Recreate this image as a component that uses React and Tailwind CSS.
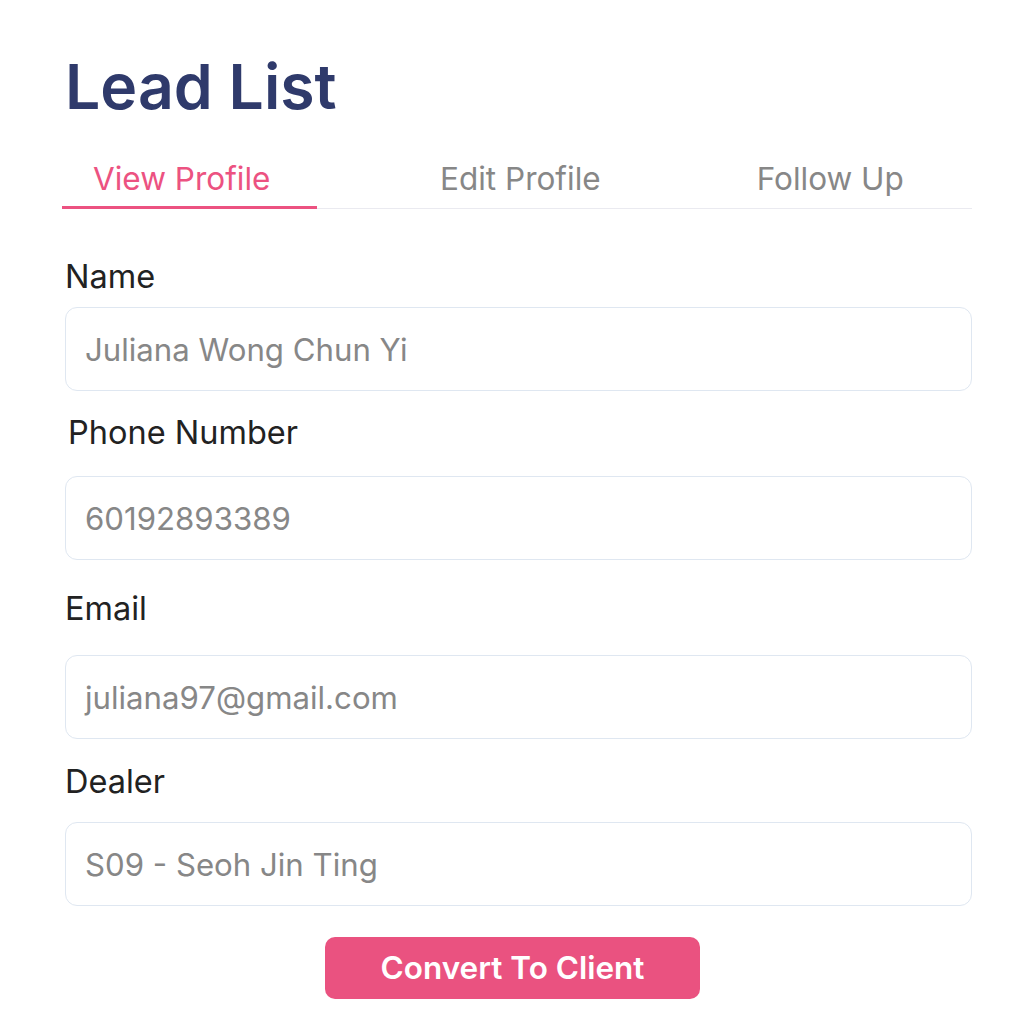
import React, { useState } from 'react';

const fields = [
  { label: 'Name', value: 'Juliana Wong Chun Yi', labelClass: 'mt-[50px]', inputClass: 'mt-[12px]' },
  { label: 'Phone Number', value: '60192893389', labelClass: 'mt-[24px] pl-[3px]', inputClass: 'mt-[25px]' },
  { label: 'Email', value: 'juliana97@gmail.com', labelClass: 'mt-[31px]', inputClass: 'mt-[28px]' },
  { label: 'Dealer', value: 'S09 - Seoh Jin Ting', labelClass: 'mt-[25px]', inputClass: 'mt-[22px]' },
];

const LeadList = () => {
  const [tab, setTab] = useState('view');

  const tabClass = (key) =>
    `pb-[9px] text-[31.5px] leading-[36px] border-b-[3px] -mb-px ${tab === key ? 'text-[#ec5281] border-[#ec5281]' : 'text-[#878787] border-transparent'}`;

  return (
    <div className="min-h-screen bg-white pl-[62px] pr-[52px] pt-[55px] font-['Inter',sans-serif]">
      <h1 className="pl-[3px] text-[62.5px] font-semibold leading-none text-[#2f3a6b]">Lead List</h1>

      {/* Tabs */}
      <div className="mt-[43px] flex border-b border-[#eaeaf0]">
        <button onClick={() => setTab('view')} className={`w-[255px] pl-[31px] text-left ${tabClass('view')}`}>
          View Profile
        </button>
        <button onClick={() => setTab('edit')} className={`ml-[123px] ${tabClass('edit')}`}>
          Edit Profile
        </button>
        <button onClick={() => setTab('follow')} className={`ml-[156px] ${tabClass('follow')}`}>
          Follow Up
        </button>
      </div>

      {/* Form */}
      <div className="pl-[3px]">
        {fields.map((f) => (
          <div key={f.label}>
            <div className={`${f.labelClass} text-[32.5px] leading-[36px] text-[#222222]`}>{f.label}</div>
            <div className={`${f.inputClass} flex h-[84px] items-center rounded-[12px] border border-[#dfe7f1] px-[19px] pt-[4px] text-[31.2px] text-[#878787]`}>
              {f.value}
            </div>
          </div>
        ))}
      </div>

      <div className="mt-[31px] pl-[263px]">
        <button className="h-[62px] w-[375px] rounded-[10px] bg-[#ea5280] text-[31.5px] font-semibold text-white">
          Convert To Client
        </button>
      </div>
    </div>
  );
};

export default function App() {
  return <LeadList />;
}
